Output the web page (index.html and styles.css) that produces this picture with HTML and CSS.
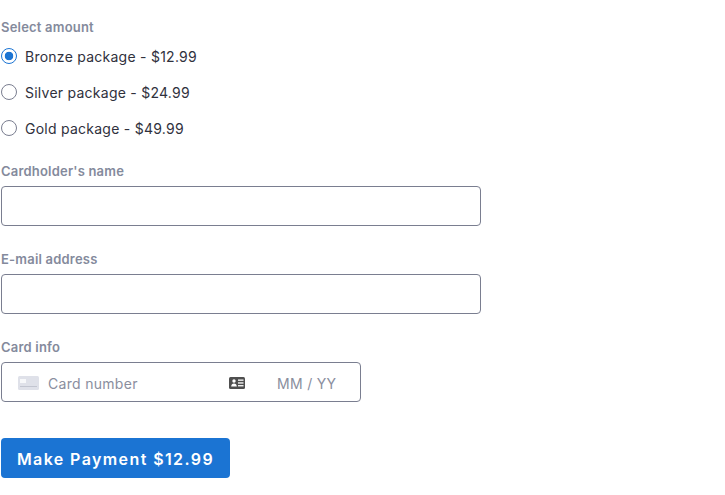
FILE: index.html
```html
<!DOCTYPE html>
<html lang="en">

<head>
    <meta charset="UTF-8">
    <title>Make Payment</title>
    <link rel="stylesheet" href="styles.css">
</head>

<body>
    <form class="payment-form">
        <div class="field">
            <div class="label">Select amount</div>
            <div class="radio-list">
                <label class="radio-row"><span class="radio checked"></span>Bronze package - $12.99</label>
                <label class="radio-row"><span class="radio"></span>Silver package - $24.99</label>
                <label class="radio-row"><span class="radio"></span>Gold package - $49.99</label>
            </div>
        </div>

        <div class="field">
            <div class="label">Cardholder's name</div>
            <input class="text-input" type="text">
        </div>

        <div class="field">
            <div class="label">E-mail address</div>
            <input class="text-input" type="text">
        </div>

        <div class="field">
            <div class="label">Card info</div>
            <div class="card-input">
                <svg class="card-icon" width="21" height="14" viewBox="0 0 21 14">
                    <rect width="21" height="14" rx="1.500" fill="#dfe1e9"/>
                    <rect x="2" y="3" width="6" height="4" fill="#f7f8fa"/>
                    <rect x="2" y="10" width="17" height="1" fill="#c2c5d0"/>
                </svg>
                <span class="card-number">Card number</span>
                <svg class="id-icon" width="16" height="12" viewBox="0 0 16 12">
                    <rect width="16" height="12" rx="1.500" fill="#4f4f4f"/>
                    <circle cx="5" cy="4" r="1.700" fill="#fff"/>
                    <path d="M2.200 9.600c0-1.900 1.200-3 2.800-3s2.800 1.100 2.800 3z" fill="#fff"/>
                    <rect x="9" y="2.500" width="5.500" height="1.300" fill="#fff"/>
                    <rect x="9" y="5.300" width="5.500" height="1.300" fill="#fff"/>
                    <rect x="9" y="8.100" width="5.500" height="1.300" fill="#fff"/>
                </svg>
                <span class="card-expiry">MM / YY</span>
            </div>
        </div>

        <button class="pay-button" type="button">Make Payment $12.99</button>
    </form>
</body>

</html>
```

FILE: styles.css
```css
body {
    font-family: Inter, "Liberation Sans", sans-serif;
    background-color: #fff;
    margin: 0;
    padding: 0;
}

.payment-form {
    padding: 20px 0 0 1px;
}

.field {
    margin-bottom: 26px;
}

.label {
    color: #848a9c;
    font-size: 13px;
    font-weight: 600;
    letter-spacing: 0.2px;
    line-height: 14px;
    margin-bottom: 8px;
}

.radio-list {
    display: flex;
    flex-direction: column;
    gap: 16px;
    padding-top: 12px;
    margin-top: -8px;
    margin-bottom: 5px;
}

.radio-row {
    display: flex;
    align-items: center;
    height: 20px;
    color: #30313d;
    font-size: 14px;
    letter-spacing: 0.25px;
}

.radio {
    box-sizing: border-box;
    width: 16px;
    height: 16px;
    border: 1px solid #7a7e90;
    border-radius: 50%;
    margin-right: 8px;
}

.radio.checked {
    border-color: #1b74d3;
    background: radial-gradient(circle, #1b74d3 0 4px, #fff 4.600px);
}

.text-input {
    display: block;
    box-sizing: border-box;
    width: 480px;
    height: 40px;
    border: 1px solid #7a7e90;
    border-radius: 4px;
    background: #fff;
}

.card-input {
    display: flex;
    align-items: center;
    box-sizing: border-box;
    width: 360px;
    height: 40px;
    padding: 2px 0 0 16px;
    border: 1px solid #7a7e90;
    border-radius: 4px;
    color: #8a8e9e;
    font-size: 14px;
    letter-spacing: 0.3px;
}

.card-number {
    margin-left: 9px;
    width: 181px;
}

.card-expiry {
    margin-left: 32px;
}

.pay-button {
    display: block;
    width: 229px;
    height: 40px;
    margin-top: 36px;
    padding: 2px 0 0;
    border: none;
    border-radius: 4px;
    background-color: #1b74d3;
    color: #fff;
    font-family: inherit;
    font-size: 16px;
    font-weight: 600;
    letter-spacing: 1.400px;
}
```
